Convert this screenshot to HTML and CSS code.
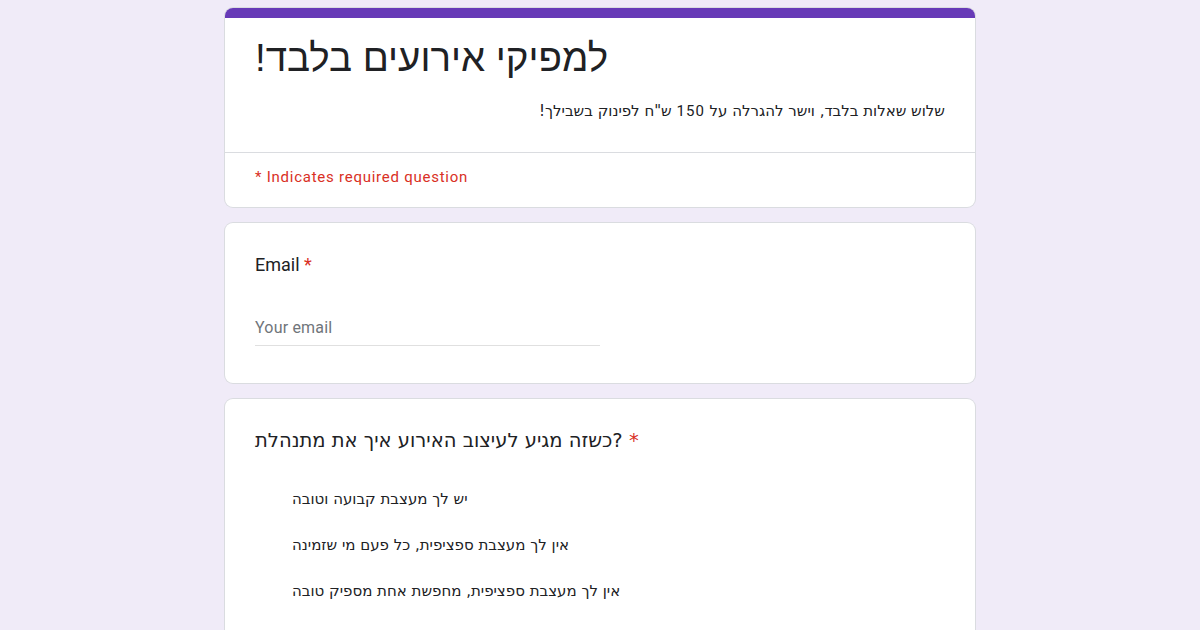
FILE: index.html
```html
<!DOCTYPE html>
<html lang="he">

<head>
    <meta charset="UTF-8">
    <meta name="viewport" content="width=device-width, initial-scale=1.0">
    <title>למפיקי אירועים בלבד!</title>
    <link rel="stylesheet" href="styles.css">
</head>

<body>

    <main class="form">
        <section class="card head-card">
            <div class="band"></div>
            <div class="head-main">
                <h1 class="form-title" dir="rtl">למפיקי אירועים בלבד!</h1>
                <p class="form-desc" dir="rtl">שלוש שאלות בלבד, וישר להגרלה על <span class="num">150</span> ש"ח לפינוק בשבילך!</p>
            </div>
            <div class="head-note">* Indicates required question</div>
        </section>

        <section class="card question">
            <div class="q-title">Email <span class="req">*</span></div>
            <div class="text-field">
                <span class="placeholder">Your email</span>
            </div>
        </section>

        <section class="card question">
            <div class="q-title hebrew">כשזה מגיע לעיצוב האירוע איך את מתנהלת? <span class="req">*</span></div>
            <ul class="options">
                <li>יש לך מעצבת קבועה וטובה</li>
                <li>אין לך מעצבת ספציפית, כל פעם מי שזמינה</li>
                <li>אין לך מעצבת ספציפית, מחפשת אחת מספיק טובה</li>
            </ul>
        </section>
    </main>

</body>

</html>
```

FILE: styles.css
```css
body {
    margin: 0;
    padding: 8px 0 0;
    background-color: #f0ebf8; /* lavender page background */
    font-family: Roboto, 'Liberation Sans', sans-serif;
    color: #202124;
}

.form {
    width: 750px;
    margin: 0 auto;
    display: flex;
    flex-direction: column;
    gap: 16px;
}

.card {
    background-color: #ffffff;
    border-radius: 8px;
    box-shadow: 0 0 0 1px #dadce0;
    overflow: hidden;
}

.band {
    height: 10px;
    background-color: #673ab7;
}

.head-main {
    padding: 16px 30px 31px;
    border-bottom: 1px solid #dadce0;
}

/* hebrew body text runs in a wider face than the latin labels */
.form-desc,
.hebrew,
.options {
    font-family: 'DejaVu Sans', 'Liberation Sans', sans-serif;
}

.form-title {
    margin: 0;
    font-family: 'Liberation Sans', sans-serif;
    font-size: 38.5px;
    font-weight: 400;
    line-height: 48px;
    text-align: left;
}

.form-desc {
    margin: 19px 0 0;
    font-size: 15px;
    line-height: 20px;
    text-align: right;
}

.num {
    font-family: Roboto, sans-serif;
    letter-spacing: 1px;
}

.head-note {
    padding: 14px 30px 20px;
    font-size: 15px;
    line-height: 20px;
    color: #d93025;
    letter-spacing: 0.75px;
}

.question {
    padding: 30px 30px 37px;
}

.q-title {
    font-size: 18px;
    line-height: 24px;
}

.q-title.hebrew {
    font-size: 19.5px;
}

.req {
    color: #d93025;
}

.text-field {
    width: 345px;
    margin-top: 41px;
    padding-bottom: 7px;
    border-bottom: 1px solid #e0e0e0;
    font-size: 16px;
    line-height: 20px;
    letter-spacing: 0.2px;
}

.placeholder {
    color: #70757a;
}

.options {
    list-style: none;
    margin: 36px 0 0;
    padding: 0 0 0 37px;
    display: flex;
    flex-direction: column;
    gap: 26px;
    font-size: 15px;
    line-height: 20px;
}
```
